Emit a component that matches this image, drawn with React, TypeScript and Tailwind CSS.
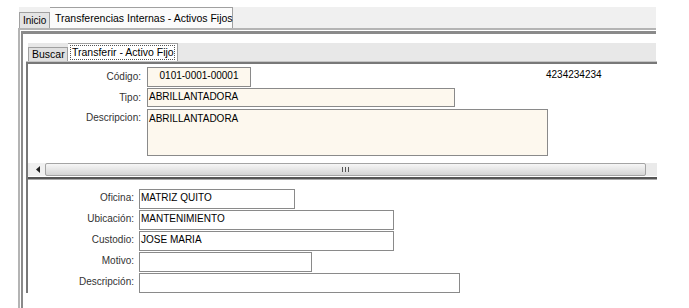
export default function App() {
  const font = "font-['Liberation_Sans',Arial,sans-serif]";

  return (
    <div className={`${font} relative h-[308px] w-[689px] overflow-hidden whitespace-nowrap bg-white pt-[7px] text-[10px] leading-none text-black`}>
      {/* outer tab strip */}
      <div className="ml-[19px] flex h-[21px] w-[637px] items-end bg-[#f0f0f0]">
        <div className="flex h-[16px] w-[31px] items-center border border-b-0 border-[#a0a0a0] bg-[#e4e4e4] pl-[3px]">
          Inicio
        </div>
        <div className="flex h-[21px] w-[183px] items-center border border-b-0 border-l-0 border-[#a0a0a0] bg-[#fbfbfb] pl-[5px] text-[10.5px]">
          Transferencias Internas - Activos Fijos
        </div>
      </div>

      {/* outer panel */}
      <div className="ml-[18px] h-[280px] w-[638px] border-l-[2px] border-t-[2px] border-[#b4b4b4] pl-px pt-px">
        <div className="h-full border-l-[2px] border-t-[3px] border-[#8a8a8a] pl-[4px] pt-[9px]">
          {/* inner tab strip */}
          <div className="ml-[1px] flex h-[18px] w-[628px] items-end bg-[#e8e8e8]">
            <div className="flex h-[14px] w-[40px] items-center border border-b-0 border-[#a0a0a0] bg-[#e0e0e0] pl-[3px] text-[10.5px]">
              Buscar
            </div>
            <div className="flex h-[18px] w-[110px] items-center border border-b-0 border-l-0 border-[#a0a0a0] bg-white px-[2px]">
              <span className="flex h-[15px] w-full items-center border border-dotted border-[#555] pl-[1px] text-[10.5px]">
                Transferir - Activo Fijo
              </span>
            </div>
          </div>

          {/* inner panel */}
          <div className="ml-[-1px] w-[631px] border-t border-[#c4c4c4]">
            <div className="border-l-[2px] border-t-[2px] border-[#787878]">
              {/* top scroll area */}
              <div className="h-[99px] pt-[3px]">
                <div className="flex h-[20px] items-center">
                  <span className="w-[114px] pr-px text-right text-[#333]">Código:</span>
                  <div className="ml-[5px] flex h-[20px] w-[104px] items-center justify-center border border-[#8a8a8a] bg-[#fdf8ee] pb-[2px]">
                    0101-0001-00001
                  </div>
                  <span className="ml-[295px] self-start pt-[3px]">4234234234</span>
                </div>
                <div className="mt-px flex h-[19px] items-center">
                  <span className="w-[114px] pr-px text-right text-[#333]">Tipo:</span>
                  <div className="ml-[5px] flex h-[19px] w-[308px] items-center border border-[#8a8a8a] bg-[#fdf8ee] pb-[2px] pl-px">
                    ABRILLANTADORA
                  </div>
                </div>
                <div className="mt-[2px] flex items-start">
                  <span className="w-[114px] pr-px pt-[4px] text-right text-[#333]">Descripcion:</span>
                  <div className="ml-[5px] h-[47px] w-[401px] border border-[#8a8a8a] bg-[#fdf8ee] pl-px pt-[4px]">
                    ABRILLANTADORA
                  </div>
                </div>
              </div>

              {/* horizontal scrollbar */}
              <div className="flex h-[13px] items-stretch bg-[#ececec] pl-[2px]">
                <div className="flex w-[15px] items-center justify-center bg-[#f0f0f0]">
                  <svg width="4" height="7" viewBox="0 0 4 7">
                    <path d="M4 0 L0 3.5 L4 7 Z" fill="#222" />
                  </svg>
                </div>
                <div className="flex w-[601px] items-center justify-center rounded-[2px] border border-[#a4a4a4] bg-gradient-to-b from-[#f6f6f6] via-[#e6e6e6] to-[#d4d4d4]">
                  <svg width="7" height="5" viewBox="0 0 7 5">
                    <path d="M0.5 0 V5 M3.5 0 V5 M6.5 0 V5" stroke="#555" strokeWidth="1" />
                  </svg>
                </div>
                <div className="flex-1 bg-[#eaeaea]" />
              </div>

              {/* separator */}
              <div className="mt-px border-t-[2px] border-[#555]" />
              <div className="border-t border-[#a8a8a8]" />

              {/* lower form */}
              <div className="flex flex-col gap-px pt-[9px]">
                {[
                  { label: "Oficina:", value: "MATRIZ QUITO", w: "w-[156px]" },
                  { label: "Ubicación:", value: "MANTENIMIENTO", w: "w-[255px]" },
                  { label: "Custodio:", value: "JOSE MARIA", w: "w-[255px]" },
                  { label: "Motivo:", value: "", w: "w-[173px]" },
                  { label: "Descripción:", value: "", w: "w-[321px]" },
                ].map((r) => (
                  <div key={r.label} className="flex h-[20px] items-center">
                    <span className="w-[107px] pb-[2px] pr-px text-right text-[#333]">{r.label}</span>
                    <div className={`ml-[4px] flex h-[20px] ${r.w} items-center border border-[#8a8a8a] bg-white pb-[3px] pl-px`}>
                      {r.value}
                    </div>
                  </div>
                ))}
              </div>
            </div>
          </div>
        </div>
      </div>
    </div>
  );
}
